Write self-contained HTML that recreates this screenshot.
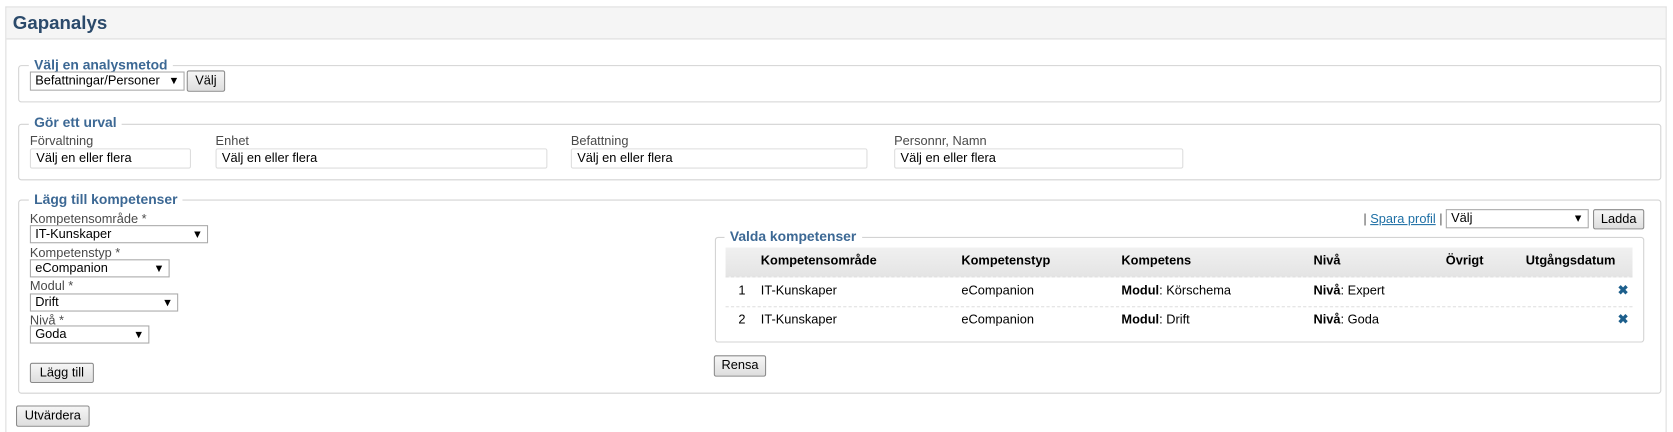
<!DOCTYPE html>
<html><head><meta charset="utf-8"><style>
*{box-sizing:border-box}
html,body{margin:0;width:1673px;height:432px;background:#fff;overflow:hidden}
#w{position:absolute;left:0;top:0;width:1568px;height:405px;transform:scale(1.067);transform-origin:0 0;font-family:"Liberation Sans",Arial,sans-serif;font-size:12px;color:#000}
.a{position:absolute}
.fs{position:absolute;border:1px solid #d3d3d3;border-radius:3px}
.lg{position:absolute;background:#fff;color:#3c6894;font-weight:bold;font-size:13px;padding:0 5px;line-height:14px}
.sel{position:absolute;border:1px solid #a9a9a9;background:#fff;font-size:12px;line-height:15px;padding-left:4px}
.sel:after{content:"";position:absolute;right:6px;top:5px;border-left:3.5px solid transparent;border-right:3.5px solid transparent;border-top:6px solid #000}
.btn{position:absolute;border:1px solid #8a8a8a;border-radius:2px;background:linear-gradient(#f6f6f6,#dedede);font-size:12px;text-align:center;line-height:17px}
.inp{position:absolute;border:1px solid #ddd;border-radius:2px;background:#fff;padding-left:5px;line-height:17px;font-size:12px}
.lb{position:absolute;color:#4a4a4a;font-size:12px;line-height:13px}
.th{position:absolute;font-weight:bold;top:237px}
.td{position:absolute}
.x{position:absolute;color:#1d5f8c;font-weight:bold;font-size:12px}
</style></head><body><div id="w">
<div class="a" style="left:5px;top:6px;width:1557px;height:399px;border:1px solid #ddd;border-bottom:none"></div>
<div class="a" style="left:6px;top:7px;width:1555px;height:30px;background:#f5f5f5;border-bottom:1px solid #ddd"></div>
<div class="a" style="left:12px;top:11px;font-size:17.5px;font-weight:bold;color:#2b4a6b">Gapanalys</div>

<div class="fs" style="left:17px;top:61px;width:1540px;height:35px"></div>
<div class="lg" style="left:27px;top:54px">Välj en analysmetod</div>
<div class="sel" style="left:28px;top:67px;width:145px;height:18px">Befattningar/Personer</div>
<div class="btn" style="left:175px;top:66px;width:36px;height:20px">Välj</div>

<div class="fs" style="left:17px;top:116px;width:1540px;height:53px"></div>
<div class="lg" style="left:27px;top:108px">Gör ett urval</div>
<div class="lb" style="left:28px;top:126px">Förvaltning</div>
<div class="inp" style="left:28px;top:139px;width:151px;height:19px">Välj en eller flera</div>
<div class="lb" style="left:202px;top:126px">Enhet</div>
<div class="inp" style="left:202px;top:139px;width:311px;height:19px">Välj en eller flera</div>
<div class="lb" style="left:535px;top:126px">Befattning</div>
<div class="inp" style="left:535px;top:139px;width:278px;height:19px">Välj en eller flera</div>
<div class="lb" style="left:838px;top:126px">Personnr, Namn</div>
<div class="inp" style="left:838px;top:139px;width:271px;height:19px">Välj en eller flera</div>

<div class="fs" style="left:17px;top:187px;width:1540px;height:182px"></div>
<div class="lg" style="left:27px;top:180px">Lägg till kompetenser</div>
<div class="lb" style="left:28px;top:199px">Kompetensområde *</div>
<div class="sel" style="left:28px;top:211px;width:167px;height:17px">IT-Kunskaper</div>
<div class="lb" style="left:28px;top:231px">Kompetenstyp *</div>
<div class="sel" style="left:28px;top:243px;width:131px;height:17px">eCompanion</div>
<div class="lb" style="left:28px;top:262px">Modul *</div>
<div class="sel" style="left:28px;top:275px;width:139px;height:17px">Drift</div>
<div class="lb" style="left:28px;top:294px">Nivå *</div>
<div class="sel" style="left:28px;top:305px;width:112px;height:17px">Goda</div>
<div class="btn" style="left:28px;top:340px;width:60px;height:19px">Lägg till</div>

<div class="a" style="right:216px;top:198px;color:#555;white-space:nowrap">| <span style="color:#1d6fa5;text-decoration:underline">Spara profil</span> |</div>
<div class="sel" style="left:1355px;top:196px;width:134px;height:18px">Välj</div>
<div class="btn" style="left:1493px;top:196px;width:48px;height:19px">Ladda</div>

<div class="fs" style="left:670px;top:222px;width:871px;height:99px"></div>
<div class="lg" style="left:679px;top:215px">Valda kompetenser</div>
<div class="a" style="left:680px;top:232px;width:850px;height:28px;background:linear-gradient(#f0f0f0,#e4e4e4);border-bottom:1px dashed #ddd"></div>
<div class="th" style="left:713px">Kompetensområde</div>
<div class="th" style="left:901px">Kompetenstyp</div>
<div class="th" style="left:1051px">Kompetens</div>
<div class="th" style="left:1231px">Nivå</div>
<div class="th" style="left:1355px">Övrigt</div>
<div class="th" style="left:1430px">Utgångsdatum</div>
<div class="a" style="left:680px;top:287px;width:850px;border-top:1px dashed #ddd"></div>
<div class="td" style="left:692px;top:265px">1</div>
<div class="td" style="left:713px;top:265px">IT-Kunskaper</div>
<div class="td" style="left:901px;top:265px">eCompanion</div>
<div class="td" style="left:1051px;top:265px"><b>Modul</b>: Körschema</div>
<div class="td" style="left:1231px;top:265px"><b>Nivå</b>: Expert</div>
<div class="x" style="left:1516px;top:265px">✖</div>
<div class="td" style="left:692px;top:292px">2</div>
<div class="td" style="left:713px;top:292px">IT-Kunskaper</div>
<div class="td" style="left:901px;top:292px">eCompanion</div>
<div class="td" style="left:1051px;top:292px"><b>Modul</b>: Drift</div>
<div class="td" style="left:1231px;top:292px"><b>Nivå</b>: Goda</div>
<div class="x" style="left:1516px;top:292px">✖</div>
<div class="btn" style="left:669px;top:333px;width:49px;height:20px">Rensa</div>

<div class="btn" style="left:15px;top:380px;width:69px;height:20px">Utvärdera</div>
</div></body></html>
